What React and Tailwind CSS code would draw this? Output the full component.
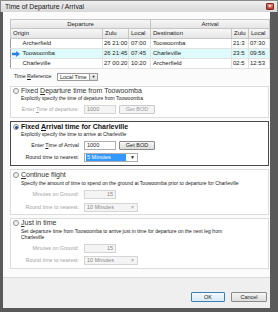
import React from "react";

const font = "font-['Liberation_Sans',Arial,sans-serif]";

function Radio({ checked }) {
  return (
    <span className="w-[6px] h-[6px] rounded-full border border-[#8e8f8f] bg-gradient-to-br from-[#e8e8e8] to-[#fdfdfd] flex items-center justify-center shrink-0">
      {checked && <span className="w-[3px] h-[3px] rounded-full bg-[#1e4f95]" />}
    </span>
  );
}

function Field({ label, value, disabled, right, children }) {
  return (
    <div className="flex items-center h-[9px]">
      <span className={`w-[68px] text-right pr-[2px] text-[5.3px] leading-[9px] whitespace-nowrap ${disabled ? "text-[#a3a3a3]" : "text-[#222]"}`}>
        {label}
      </span>
      <span
        className={`ml-[3px] w-[32px] h-[9px] border text-[5.5px] leading-[7px] px-[2px] ${right ? "text-right" : ""} ${
          disabled ? "border-[#d5d5d5] bg-[#f4f4f4] text-[#8a8a8a]" : "border-[#abadb3] bg-white text-[#222]"
        }`}
      >
        {value}
      </span>
      {children}
    </div>
  );
}

function BodButton({ disabled }) {
  return (
    <span
      className={`ml-[3px] w-[36px] h-[9px] rounded-[1px] border text-[5.5px] leading-[7px] text-center ${
        disabled ? "border-[#c9c9c9] bg-[#f4f4f4] text-[#9a9a9a]" : "border-[#8a8a8a] bg-gradient-to-b from-[#f6f6f6] to-[#dddddd] text-[#222]"
      }`}
    >
      Get BOD
    </span>
  );
}

function Round({ value, active, disabled }) {
  return (
    <div className="flex items-center h-[9px]">
      <span className={`w-[68px] text-right pr-[2px] text-[5.3px] leading-[9px] whitespace-nowrap ${disabled ? "text-[#a3a3a3]" : "text-[#222]"}`}>
        Round time to nearest:
      </span>
      <span
        className={`ml-[3px] w-[54px] h-[9px] border flex items-center justify-between pl-[1px] pr-[2px] ${
          disabled ? "border-[#d5d5d5] bg-[#f4f4f4]" : "border-[#abadb3] bg-white"
        }`}
      >
        <span
          className={`text-[5.5px] leading-[7px] px-[1px] ${
            active ? "bg-[#3399ff] text-white w-[40px]" : disabled ? "text-[#8a8a8a]" : "text-[#222]"
          }`}
        >
          {value}
        </span>
        <span className={`text-[5px] leading-[7px] ${disabled ? "text-[#b5b5b5]" : "text-[#222]"}`}>▼</span>
      </span>
    </div>
  );
}

const rows = [
  { o: "Archerfield", oz: "26 21:00", ol: "07:00", d: "Toowoomba", dz: "21:3", dl: "07:30" },
  { o: "Toowoomba", oz: "26 21:45", ol: "07:45", d: "Charleville", dz: "23:5", dl: "09:56", sel: true },
  { o: "Charleville", oz: "27 00:20", ol: "10:20", d: "Archerfield", dz: "02:5", dl: "12:53" },
];

export default function App() {
  return (
    <div className={`w-[278px] h-[312px] bg-[#595959] flex flex-col ${font}`}>
      <div className="h-[12px] shrink-0 bg-gradient-to-b from-[#efefef] to-[#d8d8d8] border border-[#8a8a8a] border-b-0 flex items-center justify-between pl-[4px] pr-[3px]">
        <span className="text-[6.8px] leading-[10px] text-[#1b1b1b]">Time of Departure / Arrival</span>
        <span className="w-[8px] h-[7px] rounded-[1px] bg-gradient-to-b from-[#e0806f] to-[#b6362a] border border-[#7b2a22] flex items-center justify-center text-white text-[5px] leading-[5px] font-bold">
          ×
        </span>
      </div>

      <div className="flex-1 ml-[3px] mr-[8px] mb-[4px] bg-[#fbfbfb] flex flex-col">
        <div className="flex-1 pl-[7px] pr-[1px] pt-[7px] flex flex-col">
          <table className="table-fixed border-collapse border border-[#9c9c9c] w-[259px] text-[6px] text-[#222]">
            <colgroup>
              <col className="w-[10px]" />
              <col className="w-[82px]" />
              <col className="w-[26px]" />
              <col className="w-[22px]" />
              <col className="w-[81px]" />
              <col className="w-[17px]" />
              <col className="w-[21px]" />
            </colgroup>
            <thead>
              <tr className="h-[9px] bg-gradient-to-b from-[#f7f7f7] to-[#e3e3e3]">
                <th colSpan={4} className="border border-[#c6c6c6] font-normal leading-[8px] p-0">
                  Departure
                </th>
                <th colSpan={3} className="border border-[#c6c6c6] font-normal leading-[8px] p-0">
                  Arrival
                </th>
              </tr>
              <tr className="h-[10px] bg-gradient-to-b from-[#f7f7f7] to-[#e3e3e3]">
                <th colSpan={2} className="border border-[#c6c6c6] font-normal text-left pl-[2px] leading-[9px]">
                  Origin
                </th>
                <th className="border border-[#c6c6c6] font-normal text-left pl-[2px] leading-[9px]">Zulu</th>
                <th className="border border-[#c6c6c6] font-normal text-left pl-[2px] leading-[9px]">Local</th>
                <th className="border border-[#c6c6c6] font-normal text-left pl-[2px] leading-[9px]">Destination</th>
                <th className="border border-[#c6c6c6] font-normal text-left pl-[2px] leading-[9px]">Zulu</th>
                <th className="border border-[#c6c6c6] font-normal text-left pl-[2px] leading-[9px]">Local</th>
              </tr>
            </thead>
            <tbody>
              {rows.map((r) => (
                <tr key={r.o} className={`h-[10px] ${r.sel ? "bg-[#defafa]" : "bg-white"}`}>
                  <td className="p-0 border-y border-[#e2e2e2]">
                    {r.sel && (
                      <svg width="8" height="6" viewBox="0 0 8 6" className="ml-[1px]">
                        <path d="M0 1.8h4.2V0L8 3 4.2 6V4.2H0z" fill="#2f7de1" />
                      </svg>
                    )}
                  </td>
                  <td className="border-y border-r border-[#e2e2e2] pl-[2px] leading-[9px] overflow-hidden whitespace-nowrap">{r.o}</td>
                  <td className="border border-[#e2e2e2] pl-[1px] leading-[9px] overflow-hidden whitespace-nowrap">{r.oz}</td>
                  <td className="border border-[#e2e2e2] pl-[2px] leading-[9px] overflow-hidden whitespace-nowrap">{r.ol}</td>
                  <td className="border border-[#e2e2e2] pl-[2px] leading-[9px] overflow-hidden whitespace-nowrap">{r.d}</td>
                  <td className="border border-[#e2e2e2] pl-[1px] leading-[9px] overflow-hidden whitespace-nowrap">{r.dz}</td>
                  <td className="border border-[#e2e2e2] pl-[1px] leading-[9px] overflow-hidden whitespace-nowrap">{r.dl}</td>
                </tr>
              ))}
            </tbody>
          </table>

          <div className="flex items-center mt-[4px] h-[8px] pl-[4px]">
            <span className="text-[5.3px] text-[#222] w-[43px]">
              Time <u>R</u>eference
            </span>
            <span className="flex h-[8px] border border-[#9c9c9c] bg-white">
              <span className="w-[31px] text-[5.5px] leading-[6px] pl-[2px] text-[#222]">Local Time</span>
              <span className="w-[8px] border-l border-[#9c9c9c] bg-gradient-to-b from-[#f4f4f4] to-[#dcdcdc] text-[4px] leading-[6px] text-center text-[#222]">
                ▼
              </span>
            </span>
          </div>

          <div className="mt-[5px] border border-[#dcdcdc] bg-white h-[32px] pl-[2px]">
            <div className="flex items-center h-[8px] gap-[2px]">
              <Radio />
              <span className="text-[7px] leading-[8px] text-[#333] whitespace-nowrap">
                Fixed <u>D</u>eparture time from Toowoomba
              </span>
            </div>
            <div className="pl-[8px] text-[5px] leading-[6px] text-[#222]">
              Explicitly specify the time of depature from Toowoomba
            </div>
            <div className="mt-[4px]">
              <Field label={<>Enter <u>T</u>ime of departure:</>} value="1000" disabled>
                <BodButton disabled />
              </Field>
            </div>
          </div>

          <div className="mt-[3px] border border-[#4a4a4a] bg-white h-[45px] pl-[2px] pt-[1px]">
            <div className="flex items-center h-[8px] gap-[2px]">
              <Radio checked />
              <span className="text-[7px] leading-[8px] font-bold text-[#111] whitespace-nowrap">
                Fixed <u>A</u>rrival time for Charleville
              </span>
            </div>
            <div className="pl-[8px] text-[5px] leading-[6px] text-[#222]">
              Explicitly specify the time to arrive at Charleville
            </div>
            <div className="mt-[4px] flex flex-col gap-[3px]">
              <Field label={<>Enter <u>T</u>ime of Arrival</>} value="1000">
                <BodButton />
              </Field>
              <Round value="5 Minutes" active />
            </div>
          </div>

          <div className="mt-[3px] border border-[#dcdcdc] bg-white h-[46px] pl-[2px] pt-[1px]">
            <div className="flex items-center h-[8px] gap-[2px]">
              <Radio />
              <span className="text-[7px] leading-[8px] text-[#333] whitespace-nowrap">
                <u>C</u>ontinue flight
              </span>
            </div>
            <div className="pl-[8px] mt-[1px] text-[5px] leading-[6px] text-[#222] whitespace-nowrap">
              Specify the amount of time to spend on the ground at Toowoomba prior to departure for Charleville
            </div>
            <div className="mt-[4px] flex flex-col gap-[4px]">
              <Field label="Minutes on Ground:" value="15" disabled right />
              <Round value="10 Minutes" disabled />
            </div>
          </div>

          <div className="mt-[3px] border border-[#dcdcdc] bg-white h-[51px] pl-[2px]">
            <div className="flex items-center h-[8px] gap-[2px]">
              <Radio />
              <span className="text-[7px] leading-[8px] text-[#333] whitespace-nowrap">
                <u>J</u>ust in time
              </span>
            </div>
            <div className="pl-[8px] mt-[1px] text-[5px] leading-[6px] text-[#222] whitespace-nowrap">
              Set departure time from Toowoomba to arrive just in time for departure on the next leg from
              <br />
              Charleville
            </div>
            <div className="mt-[4px] flex flex-col gap-[3px]">
              <Field label="Minutes on Ground:" value="15" disabled right />
              <Round value="10 Minutes" disabled />
            </div>
          </div>
        </div>

        <div className="h-[31px] shrink-0 bg-[#efefef] border-t border-[#d9d9d9] flex items-end justify-end gap-[6px] pr-[3px] pb-[6px]">
          <span className="w-[34px] h-[10px] rounded-[1px] border border-[#3c7fb1] bg-gradient-to-b from-[#f4f9fd] to-[#d9e9f6] text-[5.5px] leading-[8px] text-center text-[#222]">
            OK
          </span>
          <span className="w-[36px] h-[10px] rounded-[1px] border border-[#8a8a8a] bg-gradient-to-b from-[#f6f6f6] to-[#dddddd] text-[5.5px] leading-[8px] text-center text-[#222]">
            Cancel
          </span>
        </div>
      </div>
    </div>
  );
}
